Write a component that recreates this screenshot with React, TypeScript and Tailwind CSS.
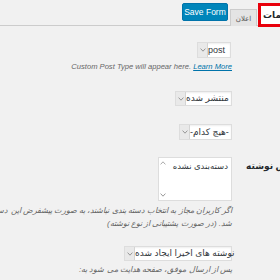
import React from "react";

const Chevron = () => (
  <svg width="6" height="4" viewBox="0 0 6 4">
    <path d="M0.6 0.6 L3 3.2 L5.4 0.6" fill="none" stroke="#8c8c8c" strokeWidth="0.9" />
  </svg>
);

const ChevronUp = () => (
  <svg width="6" height="4" viewBox="0 0 6 4">
    <path d="M0.6 3.4 L3 0.8 L5.4 3.4" fill="none" stroke="#a0a0a0" strokeWidth="0.9" />
  </svg>
);

function Select({ cls, label }: { cls: string; label: string }) {
  return (
    <div className={`flex border border-[#ddd] bg-white shadow-[inset_0_1px_2px_rgba(0,0,0,0.07)] ${cls}`} dir="ltr">
      <div className="w-[10px] shrink-0 bg-[#e9e9e9] border-r border-[#d4d4d4] flex items-center justify-center">
        <Chevron />
      </div>
      <div className="flex-1 flex items-center justify-end pr-[3px] text-[9px] leading-none text-[#32373c] whitespace-nowrap" dir="rtl">
        {label}
      </div>
    </div>
  );
}

export default function App() {
  return (
    <div className="w-[280px] h-[280px] overflow-hidden bg-[#f1f1f1] font-['Liberation_Sans','DejaVu_Sans',sans-serif]">
      {/* top tabs bar */}
      <div className="h-[26px] border-b border-[#cccccc] flex items-end pl-[182px]">
        <div className="w-[46px] h-[18px] mb-[4px] shrink-0 bg-[#0085ba] border border-[#0073aa] rounded-[2px] flex items-center justify-center text-white text-[8.5px] leading-none">
          Save Form
        </div>
        <div className="ml-[2px] w-[27px] h-[17px] mb-[-1px] shrink-0 bg-[#e4e4e4] border border-[#cccccc] border-b-0 flex items-center justify-center text-[7px] text-[#555] leading-none" dir="rtl">
          اعلان
        </div>
        <div className="ml-[1px] w-[44px] h-[24px] shrink-0 mb-[-2px] bg-white border-[3px] border-[#e8000b] flex items-center pl-[2px] text-[9px] font-bold text-[#23282d] leading-none whitespace-nowrap" dir="ltr">
          <span dir="rtl">تنظیمات</span>
        </div>
      </div>

      {/* form table */}
      <div className="flex">
        <div className="w-[232px] shrink-0 flex flex-col items-end">
          {/* row 1 */}
          <Select cls="mt-[16px] w-[34px] h-[16px] mr-[1px]" label="post" />
          <div className="mt-[3px] h-[12px] text-[7.6px] leading-[12px] italic text-[#666] whitespace-nowrap">
            Custom Post Type will appear here. <span className="text-[#0073aa] underline">Learn More</span>
          </div>

          {/* row 2 */}
          <Select cls="mt-[18px] w-[57px] h-[15px]" label="منتشر شده" />

          {/* row 3 */}
          <Select cls="mt-[18px] w-[53px] h-[16px]" label="-هیچ کدام-" />

          {/* row 4 */}
          <div className="mt-[17px] w-[74px] h-[44px] shrink-0 bg-white border border-[#ddd] flex">
            <div className="w-[8px] flex flex-col items-center justify-between py-[3px]">
              <ChevronUp />
              <Chevron />
            </div>
            <div className="flex-1 text-right pr-[3px] pt-[3px] text-[8.5px] leading-[11px] text-[#32373c] whitespace-nowrap" dir="rtl">
              دسته‌بندی نشده
            </div>
          </div>
          <div className="mt-[3px] text-[8px] leading-[13px] italic text-[#666] text-right whitespace-nowrap" dir="rtl">
            <div>اگر کاربران مجاز به انتخاب دسته بندی نباشند، به صورت پیشفرض این دسته بندی انتخاب خواهد</div>
            <div>شد. (در صورت پشتیبانی از نوع نوشته)</div>
          </div>

          {/* row 5 */}
          <Select cls="mt-[16px] w-[108px] h-[15px]" label="نوشته های اخیرا ایجاد شده" />
          <div className="mt-[3px] text-[8px] leading-[12px] italic text-[#666] whitespace-nowrap" dir="rtl">
            پس از ارسال موفق، صفحه هدایت می شود به:
          </div>
        </div>

        {/* labels column */}
        <div className="ml-[14px] shrink-0 flex flex-col">
          <div className="mt-[135px] w-max text-[9px] leading-[11px] font-bold text-[#23282d] whitespace-nowrap" dir="rtl">
            دسته بندی پیش فرض نوشته
          </div>
        </div>
      </div>
    </div>
  );
}
